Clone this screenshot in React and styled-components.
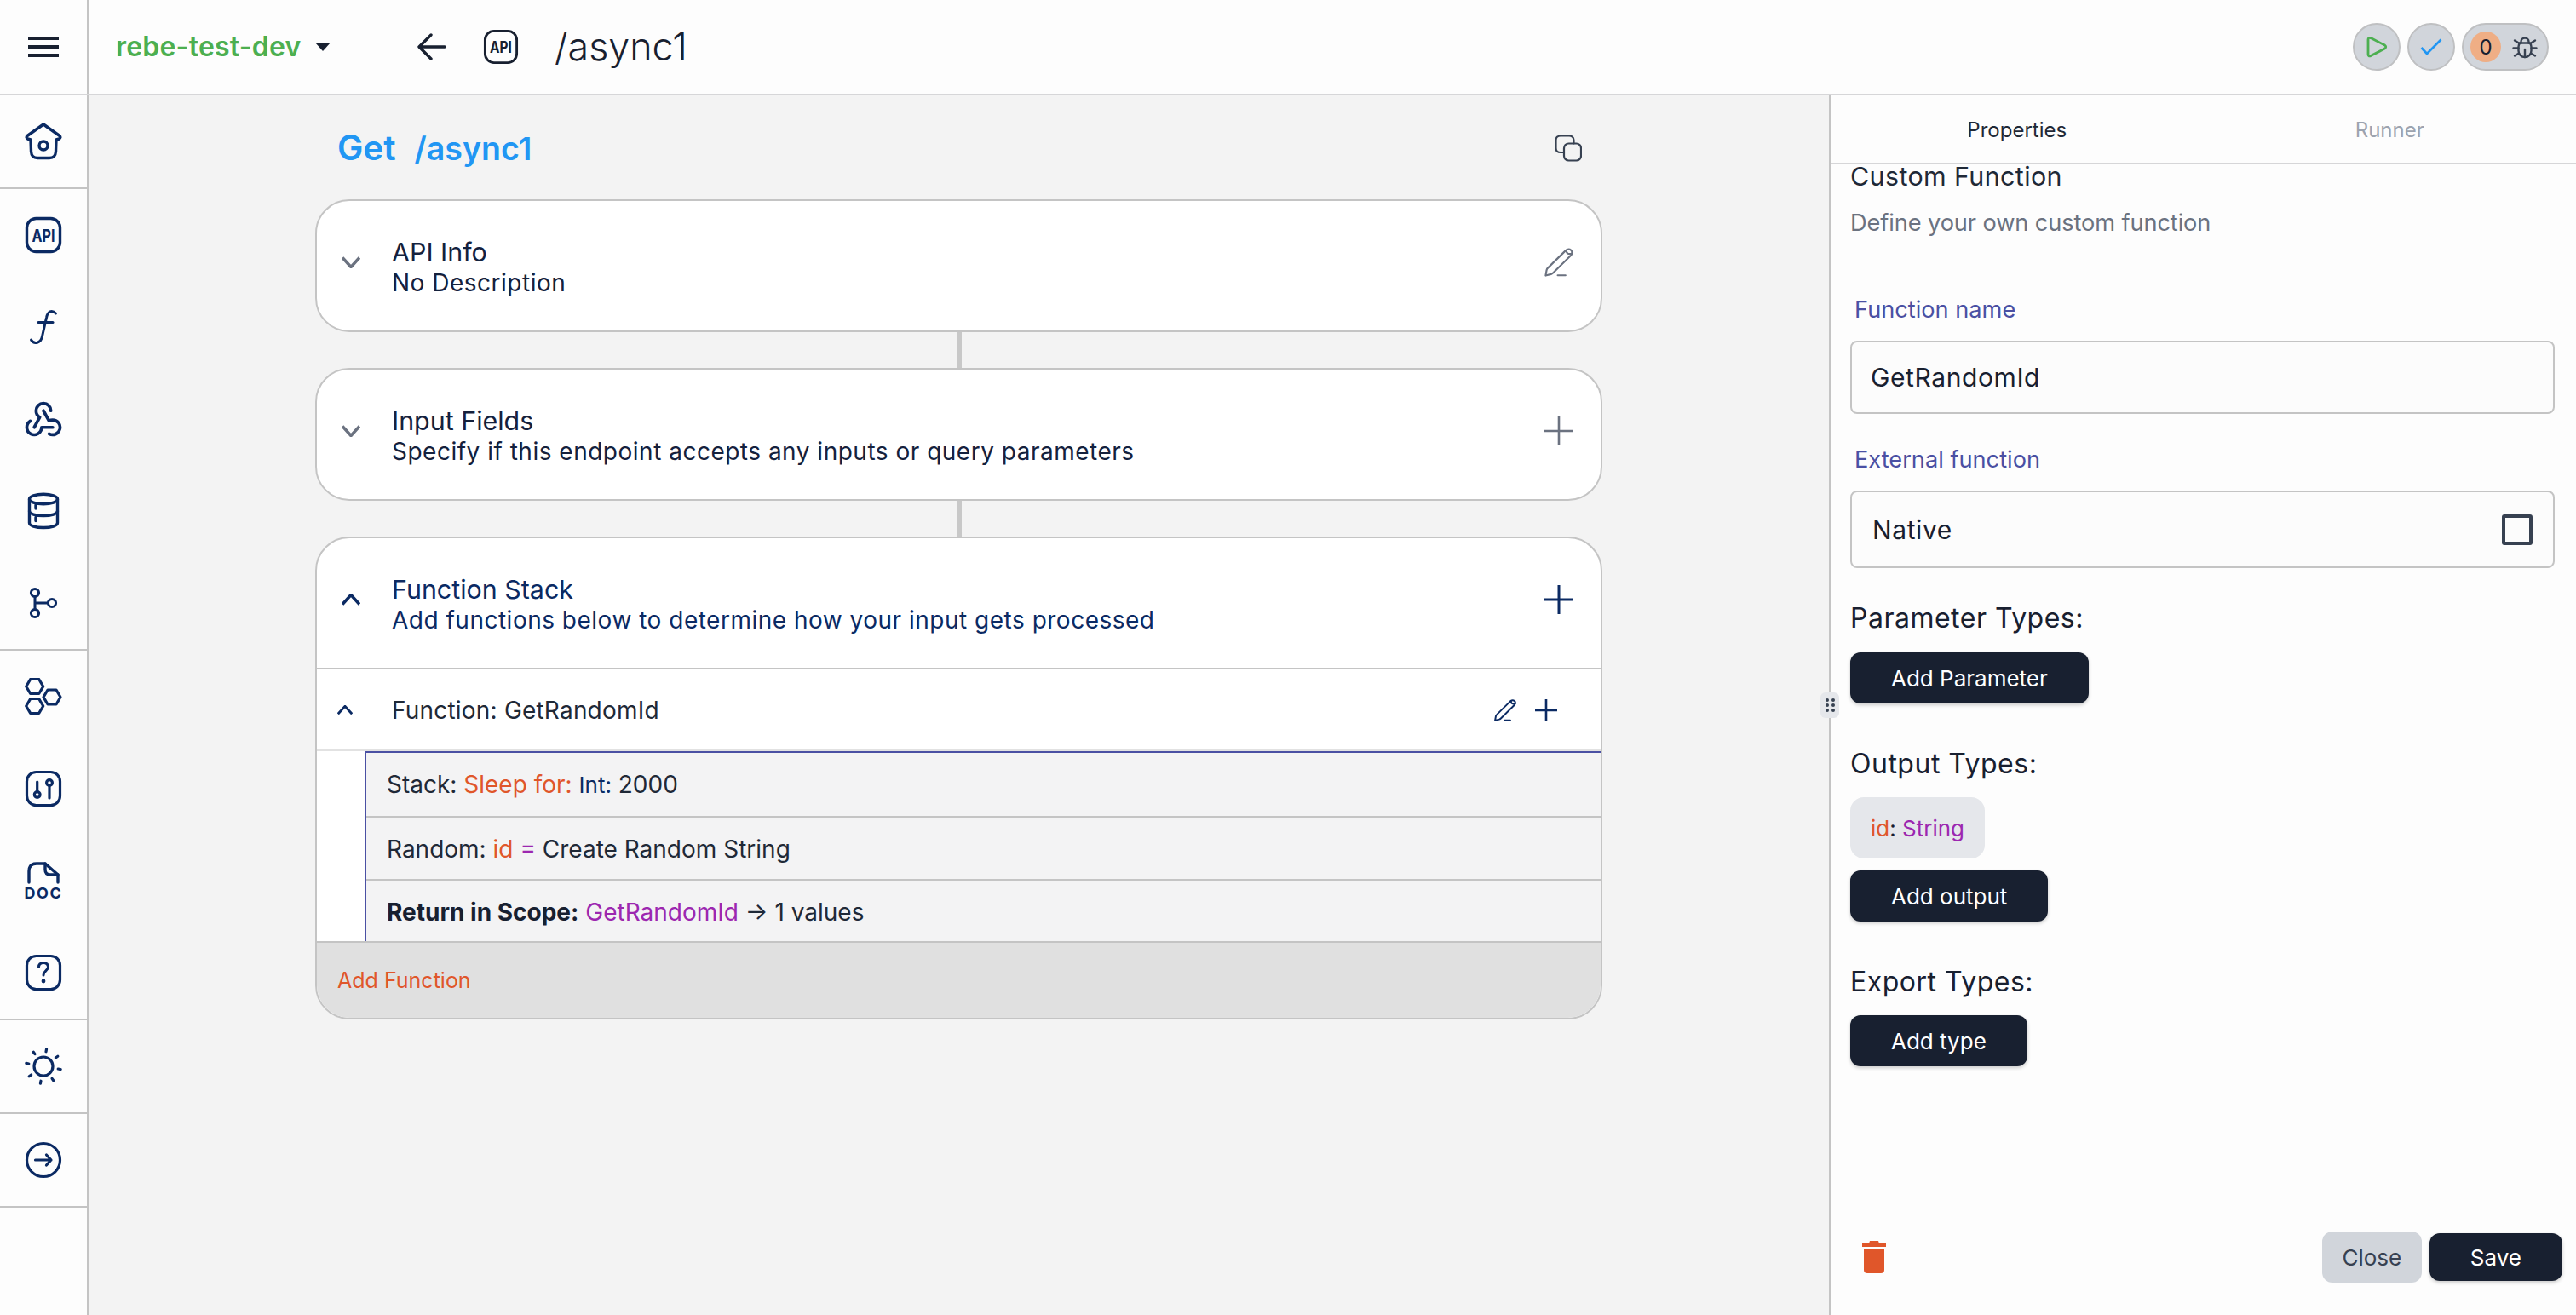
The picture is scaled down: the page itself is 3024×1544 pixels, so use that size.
import React from 'react';
import styled, { createGlobalStyle } from 'styled-components';

const NAVY = '#0b2a63';
const INK = '#182030';
const ORANGE = '#e0562a';
const PURPLE = '#9c27b0';
const INDIGO = '#4a50a3';
const LINE = '#c4c4c4';

const Global = createGlobalStyle`
  * { box-sizing: border-box; }
  html, body { margin: 0; padding: 0; height: 100%; }
  body { font-family: Inter, "Liberation Sans", sans-serif; color: ${INK}; background: #f3f3f3; overflow: hidden; }
`;

const Shell = styled.div`
  width: 3024px; height: 1544px; display: flex; flex-direction: column;
`;

/* ---------- icons ---------- */
const Svg = styled.svg.attrs((p) => ({
  width: p.$size || 44,
  height: p.$size || 44,
  viewBox: p.viewBox || '0 0 44 44',
  fill: 'none',
  stroke: 'currentColor',
  strokeWidth: p.$sw || 3.4,
  strokeLinecap: 'round',
  strokeLinejoin: 'round',
}))`
  color: ${(p) => p.$color || NAVY};
  flex: none;
  display: block;
`;
const IconLabel = styled.text`
  font-family: Inter, "Liberation Sans", sans-serif;
  font-weight: 700;
  fill: currentColor;
  stroke: none;
`;

const HomeIcon = () => (
  <Svg>
    <path d="M22 2 L3 15.5 Q1 17.5 3.5 19 L7 20 L7.5 34 Q8 41.5 15 41.5 H29 Q36 41.5 36.5 34 L37 20 L40.5 19 Q43 17.5 41 15.5 Z" />
    <circle cx="22" cy="27" r="5" />
  </Svg>
);
const ApiIcon = ({ $color, $size, $sw }) => (
  <Svg $color={$color} $size={$size} $sw={$sw}>
    <rect x="2.5" y="2.5" width="39" height="39" rx="11" />
    <IconLabel x="8.5" y="29.5" fontSize="20" textLength="27" lengthAdjust="spacingAndGlyphs">API</IconLabel>
  </Svg>
);
const FnIcon = () => (
  <Svg $sw={3}>
    <path d="M36.5 6 C32 1.5 27 3 25.5 11 L20.5 33 C19 41 11 43 7.5 37" />
    <path d="M16 16.5 H33" />
  </Svg>
);
const WebhookIcon = () => (
  <Svg viewBox="0 0.5 24 24" $size={52} $sw={1.7}>
    <path d="M4.876 13.61a4 4 0 1 0 6.124 3.39h6" />
    <path d="M15.066 20.502a4 4 0 1 0 1.934 -7.502c-.706 0 -1.424 .179 -2 .5l-3 -5.5" />
    <path d="M16 8a4 4 0 1 0 -8 0c0 1.506 .77 2.818 2 3.5l-3 5.5" />
  </Svg>
);
const DbIcon = () => (
  <Svg>
    <ellipse cx="22" cy="8" rx="16.5" ry="5.8" />
    <path d="M5.5 8 V36 C5.5 39.5 13 41.5 22 41.5 S38.5 39.5 38.5 36 V8" />
    <path d="M5.5 22 C5.5 25.5 13 27.5 22 27.5 S38.5 25.5 38.5 22" />
    <path d="M13 15 V19 M13 29.5 V33.5" />
  </Svg>
);
const BranchIcon = () => (
  <Svg $sw={3}>
    <circle cx="12" cy="10" r="4.6" />
    <circle cx="12" cy="34" r="4.6" />
    <circle cx="32" cy="22" r="4.6" />
    <path d="M12 14.6 V29.4 M12 22 H27.4" />
  </Svg>
);
const hex = (x, y) =>
  `M${x - 10} ${y} L${x - 5} ${y - 8.5} H${x + 5} L${x + 10} ${y} L${x + 5} ${y + 8.5} H${x - 5} Z`;
const HexIcon = () => (
  <Svg $sw={3.2}>
    <path d={hex(11.7, 10)} />
    <path d={hex(11.7, 33)} />
    <path d={hex(32, 22.5)} />
  </Svg>
);
const SlidersIcon = () => (
  <Svg $sw={3.2}>
    <rect x="2.5" y="2.5" width="39" height="39" rx="11" />
    <path d="M14.7 14 V25" />
    <circle cx="14.7" cy="29" r="3.4" />
    <circle cx="29" cy="15" r="3.4" />
    <path d="M29 18.4 V33" />
  </Svg>
);
const DocIcon = () => (
  <Svg viewBox="0 -3 44 50" style={{ height: 50 }}>
    <path d="M5 24 V11 Q5 2 14 2 H24 L39 15 V24" />
    <path d="M24 2 V9 Q24 15 30 15 H39" />
    <IconLabel x="22" y="42.5" fontSize="18" letterSpacing="1.6" textAnchor="middle">DOC</IconLabel>
  </Svg>
);
const HelpIcon = () => (
  <Svg $sw={3.2}>
    <rect x="2.5" y="2.5" width="39" height="39" rx="11" />
    <path d="M16.5 15.5 Q16.5 10.5 22 10.5 Q27.5 10.5 27.5 15.5 C27.5 19.5 22 20 22 25" strokeWidth="3" />
    <circle cx="22" cy="32" r="1.2" strokeWidth="2.4" />
  </Svg>
);
const SunIcon = () => (
  <Svg $sw={3.2}>
    <circle cx="22" cy="22" r="11" />
    {[0, 45, 90, 135, 180, 225, 270, 315].map((a) => (
      <path key={a} d="M22 1.5 V4.5" transform={`rotate(${a + 10} 22 22)`} strokeWidth="3.2" />
    ))}
  </Svg>
);
const GoIcon = () => (
  <Svg $sw={3.2}>
    <circle cx="22" cy="22" r="19.5" />
    <path d="M12.5 22 H31 M25.5 16 L31 22 L25.5 28" />
  </Svg>
);
const MenuIcon = () => (
  <Svg viewBox="0 0 36 24" $size={36} $color={INK} $sw={4} style={{ height: 24 }}>
    <path d="M0 2 H36 M0 12 H36 M0 22 H36" strokeLinecap="butt" />
  </Svg>
);
const BackIcon = () => (
  <Svg viewBox="0 0 34 32" $size={34} $color={INK} $sw={3.4} style={{ height: 32 }}>
    <path d="M32 16 H3 M16 2 L2 16 L16 30" />
  </Svg>
);
const PlayIcon = () => (
  <Svg viewBox="0 0 26 26" $size={26} $color="#4caf50" $sw={2.8}>
    <path d="M3 4.5 Q3 1.6 6 2.6 L22.5 11 Q25 13 22.5 15 L6 23.6 Q3 24.6 3 21.5 Z" />
  </Svg>
);
const CheckIcon = () => (
  <Svg viewBox="0 0 26 20" $size={26} $color="#2196f3" $sw={2.6} style={{ height: 20 }}>
    <path d="M1.5 11 L8 18 L24.5 1.5" strokeLinecap="butt" />
  </Svg>
);
const BugIcon = () => (
  <Svg viewBox="0 0 24 24" $size={36} $color="#374151" $sw={1.6}>
    <path d="M9 9v-1a3 3 0 0 1 6 0v1" />
    <path d="M8 9h8a6 6 0 0 1 1 3v3a5 5 0 0 1 -10 0v-3a6 6 0 0 1 1 -3" />
    <path d="M3 13l4 0M17 13l4 0M12 20l0 -6M4 19l3.35 -2M20 19l-3.35 -2M4 7l3.75 2.4M20 7l-3.75 2.4" />
  </Svg>
);
const CopyIcon = () => (
  <Svg viewBox="0 0 32 32" $size={32} $color="#374151" $sw={2.2}>
    <path d="M11 21 H7 Q1.5 21 1.5 16 V6.5 Q1.5 1.5 7 1.5 H17 Q22 1.5 22.5 6.5 V10.5" />
    <rect x="11" y="10.5" width="20" height="20" rx="5.5" />
  </Svg>
);
const PencilIcon = ({ $size = 34, $color = '#6b7280', $sw = 1.5 }) => (
  <Svg viewBox="0 0 24 24" $size={$size} $color={$color} $sw={$sw}>
    <path d="M1 23 L1.8 18.5 Q2 17.4 3 16.5 L17.6 2.2 Q20 .3 22.2 2 Q23.8 4 22 6.2 L7.5 20.5 Q6.6 21.4 5.5 21.8 Z" />
    <path d="M18.2 1.9 Q18.2 4.2 19.6 4.8 Q21.2 5.4 22.7 4.6" />
    <path d="M11 22.8 H17.5" />
  </Svg>
);
const PlusIcon = ({ $size = 34, $color = '#6b7280', $sw = 2.6 }) => (
  <Svg viewBox="0 0 34 34" $size={$size} $color={$color} $sw={$sw}>
    <path d="M17 0 V34 M0 17 H34" strokeLinecap="butt" />
  </Svg>
);
const ChevronIcon = ({ $up, $color = '#6b7280', $w = 22, $sw = 3.6 }) => (
  <Svg viewBox="0 0 22 14" $size={$w} $color={$color} $sw={$sw} style={{ height: ($w * 14) / 22 }}>
    <path d={$up ? 'M1 12.5 L11 1.5 L21 12.5' : 'M1 1.5 L11 12.5 L21 1.5'} strokeLinecap="butt" strokeLinejoin="miter" />
  </Svg>
);
const TrashIcon = () => (
  <svg width="28" height="38" viewBox="0 0 28 38" fill={ORANGE} style={{ display: 'block' }}>
    <path d="M9 0 H19 L20 3 H28 V7 H0 V3 H8 Z" />
    <path d="M2 9 H26 V34 Q26 38 22 38 H6 Q2 38 2 34 Z" />
  </svg>
);

/* ---------- top bar ---------- */
const TopBar = styled.header`
  height: 112px; flex: none; display: flex; align-items: center;
  background: #fdfdfd; border-bottom: 2px solid #d6d6d8;
`;
const MenuCell = styled.div`
  width: 104px; height: 110px; flex: none; display: flex; align-items: center; justify-content: center;
  border-right: 2px solid ${LINE};
`;
const ProjectName = styled.div`
  margin-left: 32px; font-size: 32px; font-weight: 600; color: #4caf50; line-height: 40px; width: 218px; white-space: nowrap;
  letter-spacing: .2px;
`;
const Caret = styled.span`
  margin-left: 16px; width: 0; height: 0; flex: none;
  border-left: 9px solid transparent; border-right: 9px solid transparent; border-top: 10px solid ${INK};
`;
const BackSlot = styled.div`
  margin-left: 102px; display: flex;
`;
const ApiSlot = styled.div`
  margin-left: 43px; display: flex;
`;
const PathText = styled.div`
  margin-left: 42px; font-size: 44.8px; font-weight: 300; line-height: 56px; color: ${INK};
`;
const Tools = styled.div`
  margin-left: auto; margin-right: 32px; display: flex; gap: 8px;
`;
const RoundBtn = styled.div`
  width: 56px; height: 56px; border-radius: 28px; background: #d1d5db; border: 2px solid #bfc0c2;
  display: flex; align-items: center; justify-content: center;
`;
const DebugPill = styled.div`
  width: 102px; height: 56px; border-radius: 28px; background: #d1d5db; border: 2px solid #bfc0c2;
  display: flex; align-items: center; padding-left: 8px; gap: 10px;
`;
const CountBadge = styled.span`
  width: 36px; height: 36px; border-radius: 50%; background: #efae85; flex: none;
  display: flex; align-items: center; justify-content: center; font-size: 24px; color: ${INK};
`;

/* ---------- body ---------- */
const Body = styled.div`
  flex: 1; min-height: 0; display: flex;
`;
const Rail = styled.nav`
  width: 104px; flex: none; background: #fdfdfd; border-right: 2px solid ${LINE};
  display: flex; flex-direction: column;
`;
const RailGroup = styled.div`
  border-bottom: 2px solid ${LINE}; display: flex; flex-direction: column;
`;
const RailItem = styled.div`
  height: 108px; display: flex; align-items: center; justify-content: center;
`;

const Main = styled.main`
  flex: 1; min-width: 0; background: #f3f3f3;
`;
const Column = styled.div`
  width: 1511px; margin: 0 auto; display: flex; flex-direction: column;
`;
const TitleRow = styled.div`
  height: 122px; display: flex; align-items: center; justify-content: space-between; padding: 2px 24px 0 26px;
`;
const PageTitle = styled.h1`
  margin: 0; display: flex; align-items: baseline; gap: 22px; line-height: 48px; font-weight: 600; color: #2196f3;
`;
const TitleVerb = styled.span`
  font-size: 40.5px;
`;
const TitlePath = styled.span`
  font-size: 37.5px;
`;
const Card = styled.section`
  background: #fff; border: 2px solid ${LINE}; border-radius: 40px; overflow: hidden;
`;
const CardHead = styled.div`
  height: 152px; display: flex; align-items: flex-start; padding: 42px 32px 0 26px;
`;
const ChevronSlot = styled.div`
  width: 62px; height: 60px; flex: none; display: flex; align-items: center;
  padding-left: 3px;
`;
const CardText = styled.div`
  flex: 1; min-width: 0; color: ${(p) => p.$color};
`;
const CardTitle = styled.div`
  font-size: 30.4px; line-height: 36px; font-weight: 400;
`;
const CardSub = styled.div`
  font-size: 28px; line-height: 36px; font-weight: 400; letter-spacing: .5px;
`;
const ActionSlot = styled.div`
  height: 60px; display: flex; align-items: center; flex: none;
`;
const Connector = styled.div`
  width: 6px; height: 42px; background: #c8c8c8; align-self: center;
`;
const FnRow = styled.div`
  height: 98px; display: flex; align-items: center; padding: 2px 51px 0 24px;
  border-top: 2px solid ${LINE}; border-bottom: 2px solid #e2e2e2;
`;
const FnChevron = styled.div`
  width: 64px; flex: none; display: flex;
`;
const FnTitle = styled.div`
  flex: 1; font-size: 28px; line-height: 36px; color: #1f2937; letter-spacing: .2px;
`;
const FnActions = styled.div`
  display: flex; align-items: center; gap: 22px;
`;
const Stack = styled.div`
  margin-left: 56px; border-left: 2px solid ${INDIGO}; border-top: 2px solid ${INDIGO};
`;
const StackRow = styled.div`
  height: 74px; padding-left: 24px; background: #f3f3f4;
  font-size: 28px; line-height: 74px; color: #1f2937; white-space: pre;
  & + & { border-top: 2px solid ${LINE}; }
  &:last-child { height: 73px; }
`;
const Tone = styled.span`
  color: ${(p) => p.$c}; font-weight: ${(p) => p.$w || 400}; font-size: ${(p) => p.$s || 'inherit'};
`;
const CardFoot = styled.div`
  height: 90px; display: flex; align-items: center; padding-left: 24px; background: #e0e0e0;
  border-top: 2px solid ${LINE}; color: ${ORANGE}; font-size: 25px;
`;

/* ---------- panel ---------- */
const Panel = styled.aside`
  position: relative; width: 877px; flex: none; background: #fdfdfd; border-left: 2px solid ${LINE};
  display: flex; flex-direction: column;
`;
const Tabs = styled.div`
  height: 81px; flex: none; display: flex; border-bottom: 2px solid #d6d6d8;
`;
const Tab = styled.div`
  flex: 1; display: flex; align-items: center; justify-content: center; padding-top: 2px;
  font-size: 24px; color: ${(p) => (p.$active ? '#1f2937' : '#9ca3af')};
`;
const Content = styled.div`
  flex: 1; padding: 0 23px; display: flex; flex-direction: column; align-items: flex-start;
`;
const PanelTitle = styled.div`
  font-size: 30.4px; line-height: 28px; color: #1f2937; letter-spacing: .4px;
`;
const PanelDesc = styled.div`
  margin-top: 23px; font-size: 27.2px; line-height: 36px; color: #6b7280; letter-spacing: -.1px;
`;
const FieldLabel = styled.label`
  margin-top: ${(p) => p.$mt}px; margin-left: 5px; font-size: 27.2px; line-height: 36px; color: ${INDIGO};
`;
const Field = styled.div`
  margin-top: 18px; width: 827px; height: ${(p) => p.$h}px; border: 2px solid ${LINE}; border-radius: 8px; background: #fcfcfc;
  display: flex; align-items: center; justify-content: space-between; padding: 0 22px 0 ${(p) => p.$pl}px;
  font-size: 30px; color: ${INK}; letter-spacing: .6px;
`;
const Box = styled.span`
  width: 36px; height: 36px; border: 4px solid #374151; border-radius: 3px; flex: none; margin-right: 2px;
`;
const SectionTitle = styled.div`
  margin-top: ${(p) => p.$mt}px; font-size: 32px; line-height: 40px; color: ${INK}; letter-spacing: .5px;
`;
const DarkBtn = styled.button`
  height: ${(p) => p.$h || 60}px; border: 0; border-radius: 12px; background: ${INK}; color: #fff;
  font: 400 26px Inter, "Liberation Sans", sans-serif; padding: 0 ${(p) => p.$px || 48}px;
  margin-top: ${(p) => p.$mt || 0}px; box-shadow: 0 2px 4px rgba(0,0,0,.2);
`;
const Chip = styled.div`
  margin-top: 19px; height: 72px; display: flex; align-items: center; padding: 0 24px; border-radius: 16px;
  background: #e5e7eb; font-size: 26px; white-space: pre;
`;
const PanelFoot = styled.div`
  flex: none; height: 98px; padding: 0 16px 38px 37px; display: flex; align-items: center; justify-content: space-between;
`;
const FootBtns = styled.div`
  display: flex; align-items: center; gap: 9px;
`;
const GhostBtn = styled.button`
  height: 60px; width: 117px; border: 0; border-radius: 12px; background: #d1d5db; color: #374151;
  font: 400 26px Inter, "Liberation Sans", sans-serif; padding: 0;
`;
const Grip = styled.div`
  position: absolute; left: -12px; top: 701px; width: 22px; height: 30px; border-radius: 6px; background: #e5e7eb;
  display: grid; grid-template-columns: 4px 4px; grid-auto-rows: 4px; gap: 2px 3px; justify-content: center; align-content: center;
`;
const GripDot = styled.span`
  background: #374151; border-radius: 50%;
`;

const railGroups = [
  [HomeIcon],
  [ApiIcon, FnIcon, WebhookIcon, DbIcon, BranchIcon],
  [HexIcon, SlidersIcon, DocIcon, HelpIcon],
  [SunIcon],
  [GoIcon],
];

export default function App() {
  return (
    <Shell>
      <Global />
      <TopBar>
        <MenuCell><MenuIcon /></MenuCell>
        <ProjectName>rebe-test-dev</ProjectName>
        <Caret />
        <BackSlot><BackIcon /></BackSlot>
        <ApiSlot><ApiIcon $color={INK} $size={42} $sw={3} /></ApiSlot>
        <PathText>/async1</PathText>
        <Tools>
          <RoundBtn><PlayIcon /></RoundBtn>
          <RoundBtn><CheckIcon /></RoundBtn>
          <DebugPill><CountBadge>0</CountBadge><BugIcon /></DebugPill>
        </Tools>
      </TopBar>
      <Body>
        <Rail>
          {railGroups.map((group, i) => (
            <RailGroup key={i}>
              {group.map((Icon, j) => (
                <RailItem key={j}><Icon /></RailItem>
              ))}
            </RailGroup>
          ))}
        </Rail>
        <Main>
          <Column>
            <TitleRow>
              <PageTitle><TitleVerb>Get</TitleVerb><TitlePath>/async1</TitlePath></PageTitle>
              <CopyIcon />
            </TitleRow>
            <Card>
              <CardHead>
                <ChevronSlot><ChevronIcon /></ChevronSlot>
                <CardText $color="#14213d">
                  <CardTitle>API Info</CardTitle>
                  <CardSub>No Description</CardSub>
                </CardText>
                <ActionSlot><PencilIcon /></ActionSlot>
              </CardHead>
            </Card>
            <Connector />
            <Card>
              <CardHead>
                <ChevronSlot><ChevronIcon /></ChevronSlot>
                <CardText $color="#14213d">
                  <CardTitle>Input Fields</CardTitle>
                  <CardSub>Specify if this endpoint accepts any inputs or query parameters</CardSub>
                </CardText>
                <ActionSlot><PlusIcon /></ActionSlot>
              </CardHead>
            </Card>
            <Connector />
            <Card>
              <CardHead>
                <ChevronSlot><ChevronIcon $up $color={NAVY} /></ChevronSlot>
                <CardText $color={NAVY}>
                  <CardTitle>Function Stack</CardTitle>
                  <CardSub>Add functions below to determine how your input gets processed</CardSub>
                </CardText>
                <ActionSlot><PlusIcon $color={NAVY} $sw={3} /></ActionSlot>
              </CardHead>
              <FnRow>
                <FnChevron><ChevronIcon $up $color={NAVY} $w={18} $sw={3.4} /></FnChevron>
                <FnTitle>Function: GetRandomId</FnTitle>
                <FnActions>
                  <PencilIcon $size={26} $color={NAVY} $sw={1.8} />
                  <PlusIcon $size={26} $color={NAVY} $sw={3.4} />
                </FnActions>
              </FnRow>
              <Stack>
                <StackRow>Stack: <Tone $c={ORANGE}>Sleep for:</Tone> <Tone $c={NAVY} $s="26px">Int:</Tone> 2000</StackRow>
                <StackRow>Random: <Tone $c={ORANGE}>id</Tone> <Tone $c={PURPLE}>=</Tone> Create Random String</StackRow>
                <StackRow><Tone $c={INK} $w={700}>Return in Scope:</Tone> <Tone $c={PURPLE}>GetRandomId</Tone> → 1 values</StackRow>
              </Stack>
              <CardFoot>Add Function</CardFoot>
            </Card>
          </Column>
        </Main>
        <Panel>
          <Tabs>
            <Tab $active>Properties</Tab>
            <Tab>Runner</Tab>
          </Tabs>
          <Content>
            <PanelTitle>Custom Function</PanelTitle>
            <PanelDesc>Define your own custom function</PanelDesc>
            <FieldLabel $mt={66}>Function name</FieldLabel>
            <Field $h={86} $pl={22}>GetRandomId</Field>
            <FieldLabel $mt={36}>External function</FieldLabel>
            <Field $h={91} $pl={24}>Native<Box /></Field>
            <SectionTitle $mt={39}>Parameter Types:</SectionTitle>
            <DarkBtn $mt={20}>Add Parameter</DarkBtn>
            <SectionTitle $mt={51}>Output Types:</SectionTitle>
            <Chip><Tone $c={ORANGE}>id</Tone>: <Tone $c={PURPLE}>String</Tone></Chip>
            <DarkBtn $mt={14}>Add output</DarkBtn>
            <SectionTitle $mt={51}>Export Types:</SectionTitle>
            <DarkBtn $mt={19}>Add type</DarkBtn>
          </Content>
          <PanelFoot>
            <TrashIcon />
            <FootBtns>
              <GhostBtn>Close</GhostBtn>
              <DarkBtn $h={56} $px={48}>Save</DarkBtn>
            </FootBtns>
          </PanelFoot>
          <Grip>{[0, 1, 2, 3, 4, 5].map((d) => <GripDot key={d} />)}</Grip>
        </Panel>
      </Body>
    </Shell>
  );
}
